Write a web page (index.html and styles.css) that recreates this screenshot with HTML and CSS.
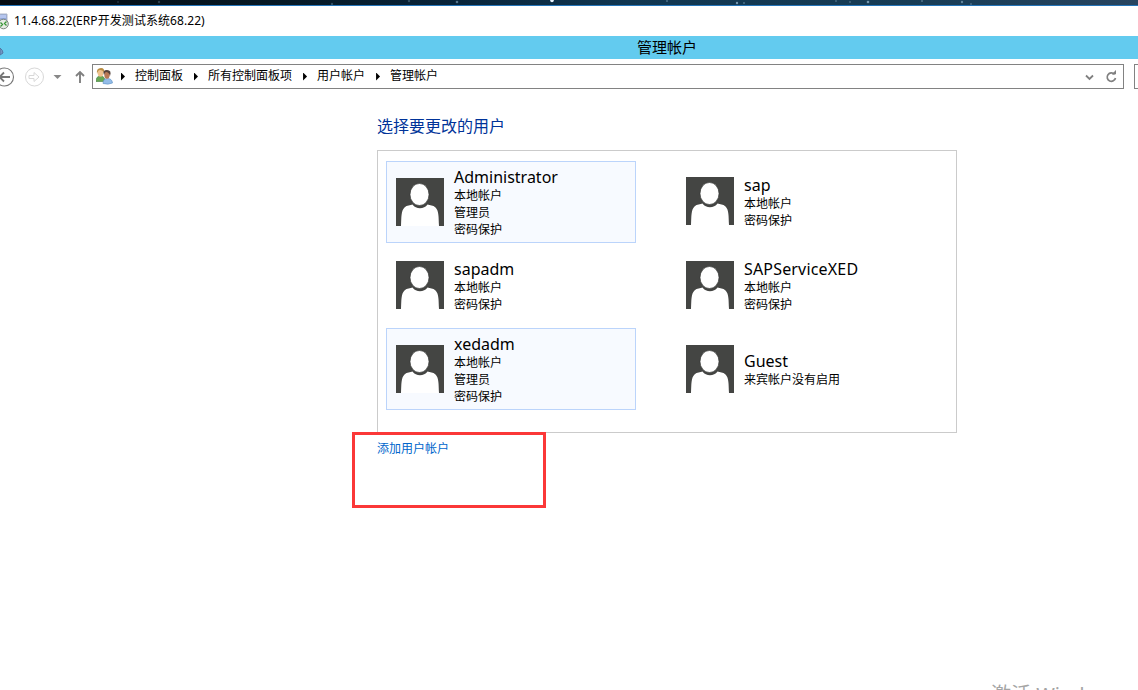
FILE: index.html
```html
<!DOCTYPE html>
<html lang="zh-CN">
<head>
<meta charset="utf-8">
<title>管理帐户</title>
<link rel="stylesheet" href="styles.css">
</head>
<body>
<svg class="defs" width="0" height="0"><defs>
<symbol id="avatar" viewBox="0 0 48 48"><path fill="#444543" d="M0 0h48v48H0z"/><path fill="#fff" d="M5 48C5.500 39 5 33 8.500 29.500C11 27 14.500 27.500 16.500 26.500C20 31.500 28 31.500 31.500 26.500C34 27.500 37 27 39.500 29.500C43 33 42.500 39 43 48z"/><ellipse cx="23.500" cy="16.500" rx="9.500" ry="11" fill="#fff" stroke="#333432" stroke-width=".6"/></symbol>
</defs></svg>
<svg class="desktop" viewBox="0 0 1138 5"><g fill="#7396ae"><circle cx="552" cy=".5" r="1.800" fill="#e8f4ff"/><circle cx="457" cy="2" r="1.300" opacity=".7"/><circle cx="409" cy="1" r="1.200" opacity=".4"/><circle cx="332" cy="4" r="1.200" opacity=".4"/><circle cx="159" cy="2" r="1.200" opacity=".35"/><circle cx="118" cy="2" r="1" opacity=".25"/><circle cx="737" cy="3" r="1.200"/><circle cx="744" cy="3" r="1" opacity=".6"/><circle cx="667" cy="1" r="1" opacity=".6"/><circle cx="836" cy="1" r="1" opacity=".5"/><circle cx="850" cy="2" r="1" opacity=".5"/><circle cx="868" cy="2" r="1.300"/><circle cx="922" cy="1" r="1" opacity=".6"/><circle cx="962" cy="2" r="1.200" opacity=".8"/><circle cx="971" cy="4" r="1" opacity=".5"/></g></svg>
<header class="session">
  <svg class="session-icon" viewBox="0 0 10 18"><path d="M0 2h7v10H0z" fill="#8fa6dc" stroke="#aeb5c4"/><path d="M0 3h6v3H0z" fill="#b6c6ef"/><circle cx="3.500" cy="12" r="4.800" fill="#e6ebe4" stroke="#7c857d"/><path d="M.5 10.500l2 2-2 2M6.500 9.500l-2 2 2 2" fill="none" stroke="#379535" stroke-width="1.300"/></svg>
  <span>11.4.68.22(ERP开发测试系统68.22)</span>
</header>
<div class="titlebar"><svg class="title-icon" viewBox="0 0 4 8"><path d="M0 0q3 2 3 5L0 7z" fill="#7196c5" stroke="#5276a2"/></svg><span>管理帐户</span></div>
<nav class="navbar">
  <svg class="nav-buttons" viewBox="0 0 92 28" fill="none"><circle cx="4.500" cy="14" r="9" stroke="#777" stroke-width="1.100"/><path d="M10 14H0M4 9.500L-.5 14 4 18.500" stroke="#777" stroke-width="1.800"/><circle cx="34.500" cy="14" r="9" stroke="#d8d8d8"/><path d="M29 12.500h5V9.500l5 4.500-5 4.500v-3h-5z" stroke="#d8d8d8"/><path d="M53.500 12h8l-4 4z" fill="#888"/><path d="M80 20V9M76 13l4-4 4 4" stroke="#808080" stroke-width="1.900"/></svg>
  <div class="address">
    <svg class="users" viewBox="0 0 17 17"><path d="M0 13.500Q0 8 4.500 8T9 13.500z" fill="#67a653" stroke="#3f803f" stroke-width=".6"/><ellipse cx="4.500" cy="5" rx="2.800" ry="3.800" fill="#efc28d"/><path d="M1 6Q0 0 5 0q4 0 3 5-1-3-4-3-2 0-3 4" fill="#b98c41"/><path d="M7 15.500q0-5 4.500-5t5 4.500q-4 2-9.500.5" fill="#93bce8" stroke="#5b8fc3" stroke-width=".6"/><ellipse cx="11" cy="7" rx="2.700" ry="3.700" fill="#b97955"/><path d="M8 7Q6 2 11 2q5 0 3 6-1-4-4-4-1 0-2 3" fill="#54413a"/></svg>
    <i class="crumb-arrow"></i><span class="crumb c1">控制面板</span><i class="crumb-arrow"></i><span class="crumb c2">所有控制面板项</span><i class="crumb-arrow"></i><span class="crumb c3">用户帐户</span><i class="crumb-arrow"></i><span class="crumb">管理帐户</span>
    <svg class="tools" viewBox="0 0 36 18" fill="none" stroke="#808080"><path d="M2 7.500l3.500 3.500L9 7.500" stroke-width="1.800"/><path d="M30.500 6.300A4.200 4.200 0 1 0 31.500 10" stroke-width="1.700"/><path d="M28 6h3.500V2.500" fill="#808080" stroke-width="1"/></svg>
  </div>
  <div class="search"></div>
</nav>
<main class="content">
  <h1>选择要更改的用户</h1>
  <section class="accounts">
    <article class="account admin"><svg class="avatar"><use href="#avatar"/></svg><div class="info"><h2>Administrator</h2><p>本地帐户</p><p>管理员</p><p>密码保护</p></div></article>
    <article class="account raised"><svg class="avatar"><use href="#avatar"/></svg><div class="info"><h2>sap</h2><p>本地帐户</p><p>密码保护</p></div></article>
    <article class="account middle"><svg class="avatar"><use href="#avatar"/></svg><div class="info"><h2>sapadm</h2><p>本地帐户</p><p>密码保护</p></div></article>
    <article class="account middle"><svg class="avatar"><use href="#avatar"/></svg><div class="info"><h2 class="wide">SAPServiceXED</h2><p>本地帐户</p><p>密码保护</p></div></article>
    <article class="account admin"><svg class="avatar"><use href="#avatar"/></svg><div class="info"><h2>xedadm</h2><p>本地帐户</p><p>管理员</p><p>密码保护</p></div></article>
    <article class="account"><svg class="avatar"><use href="#avatar"/></svg><div class="info"><h2>Guest</h2><p>来宾帐户没有启用</p></div></article>
  </section>
  <a class="add">添加用户帐户</a>
</main>
<div class="highlight"></div>
<div class="watermark">激活 Windows</div>
</body>
</html>
```
FILE: styles.css
```css
* { box-sizing: border-box; }
body { margin: 0; width: 1138px; height: 690px; position: relative; overflow: hidden; background: #fff; color: #000; font: 12px/17px "Noto Sans", "Noto Sans CJK SC", sans-serif; }
h1, h2, p { margin: 0; font-weight: 400; }
svg { display: block; flex: none; }
.defs { position: absolute; }
.desktop { width: 1138px; height: 5px; background: linear-gradient(90deg, #040b12, #061925 25%, #08243a 40%, #103650 55%, #173c55 80%, #27445f); }
.session { height: 31px; border-top: 1px solid #2474b8; display: flex; align-items: center; white-space: nowrap; }
.session-icon { width: 10px; height: 18px; margin-right: 4px; }
.session span { letter-spacing: .07px; margin-top: -1px; }
.titlebar { height: 23px; background: #63cbef; display: flex; align-items: center; font-size: 15px; line-height: 23px; }
.title-icon { width: 4px; height: 8px; margin-top: 8px; margin-right: 633px; }
.navbar { height: 36px; padding-top: 5px; display: flex; align-items: flex-start; }
.nav-buttons { width: 92px; height: 28px; margin-top: -1px; overflow: hidden; }
.address { width: 1032px; flex: none; height: 25px; border: 1px solid #828282; display: flex; align-items: center; padding-left: 3px; }
.users { width: 17px; height: 17px; margin-right: 8px; }
.crumb-arrow { width: 4px; height: 8px; margin-right: 10px; background: #000; clip-path: polygon(0 0, 100% 50%, 0 100%); }
.crumb { height: 17px; margin-top: -2px; white-space: nowrap; }
.c1, .c2, .c3 { margin-right: 11px; }
.tools { width: 36px; height: 18px; margin-left: auto; margin-right: 3px; }
.search { width: 20px; flex: none; height: 25px; margin-left: 10px; border: 1px solid #828282; }
.content { margin-left: 377px; width: 580px; padding-top: 19px; }
.content h1 { height: 36px; color: #003399; font-size: 16px; line-height: 24px; }
.accounts { height: 283px; border: 1px solid #cbcbcb; padding: 10px 8px; display: grid; grid-template: 83px 84px 82px / 290px 250px; }
.account { width: 250px; height: 82px; display: flex; align-items: center; padding-left: 10px; }
.admin { background: #f7faff; border: 1px solid #bbd4fb; padding-left: 9px; }
.avatar { width: 48px; height: 48px; margin-right: 10px; }
.raised .avatar { margin-top: -2px; }
.info { padding-top: 1px; }
.middle .info { padding-top: 3px; }
.info h2 { font-size: 16px; line-height: 19px; height: 19px; }
.info .wide { letter-spacing: .17px; }
.info p { height: 17px; }
.add { display: block; margin-top: 7px; color: #0066cc; }
.highlight { position: absolute; left: 352px; top: 432px; width: 194px; height: 76px; border: 3px solid #fb3838; }
.watermark { position: absolute; left: 991px; top: 683px; font-size: 20px; line-height: 24px; color: #a5a5a5; white-space: nowrap; clip-path: inset(0 24px 0 0); }
```
